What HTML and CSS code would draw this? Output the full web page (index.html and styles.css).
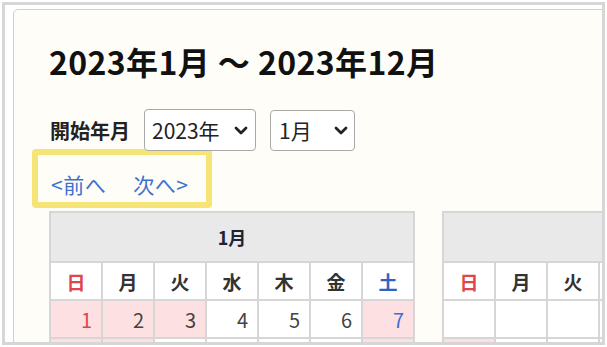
FILE: index.html
```html
<!DOCTYPE html>
<html lang="ja">
<head>
<meta charset="utf-8">
<link rel="stylesheet" href="styles.css">
</head>
<body>
<div class="frame">
  <div class="panel">
    <h1 class="title">2023年1月 〜 2023年12月</h1>
    <div class="form-row">
      <span class="form-label">開始年月</span>
      <div class="select-wrap year">
        <select class="select"><option>2023年</option></select>
        <svg class="chev" viewBox="0 0 14 9" width="14" height="9"><path d="M2 2 L7 7 L12 2" fill="none" stroke="#222" stroke-width="2.8" stroke-linecap="round" stroke-linejoin="round"/></svg>
      </div>
      <div class="select-wrap month">
        <select class="select"><option>1月</option></select>
        <svg class="chev" viewBox="0 0 14 9" width="14" height="9"><path d="M2 2 L7 7 L12 2" fill="none" stroke="#222" stroke-width="2.8" stroke-linecap="round" stroke-linejoin="round"/></svg>
      </div>
    </div>
    <div class="nav">
      <a class="nav-link" href="#">&lt;前へ</a><a class="nav-link next" href="#">次へ&gt;</a>
    </div>
    <div class="cals">
      <table class="cal">
        <tr><th class="cal-head" colspan="7">1月</th></tr>
        <tr class="wk"><td class="sun">日</td><td>月</td><td>火</td><td>水</td><td>木</td><td>金</td><td class="sat">土</td></tr>
        <tr class="days"><td class="hol sun">1</td><td class="hol">2</td><td class="hol">3</td><td>4</td><td>5</td><td>6</td><td class="hol sat">7</td></tr>
        <tr class="days"><td class="hol sun">8</td><td class="hol">9</td><td>10</td><td>11</td><td>12</td><td>13</td><td class="hol sat">14</td></tr>
      </table>
      <table class="cal">
        <tr><th class="cal-head" colspan="7">2月</th></tr>
        <tr class="wk"><td class="sun">日</td><td>月</td><td>火</td><td>水</td><td>木</td><td>金</td><td class="sat">土</td></tr>
        <tr class="days"><td></td><td></td><td></td><td>1</td><td>2</td><td>3</td><td class="hol sat">4</td></tr>
        <tr class="days"><td class="hol sun">5</td><td>6</td><td>7</td><td>8</td><td>9</td><td>10</td><td class="hol sat">11</td></tr>
      </table>
    </div>
  </div>
</div>
</body>
</html>
```
FILE: styles.css
```css
html, body {
  margin: 0;
  padding: 0;
  background: #ffffff;
}
body {
  font-family: "Noto Sans CJK JP", "Noto Sans", sans-serif;
  color: #222;
}
.frame {
  box-sizing: border-box;
  margin: 2px;
  width: 603px;
  height: 343px;
  border: 3px solid #d6d6d6;
  overflow: hidden;
  padding: 4px 0 0 8px;
  background: #fff;
}
.panel {
  width: 760px;
  height: 600px;
  border: 1px solid #d9cfb1;
  border-radius: 5px 0 0 0;
  background: #fefdf8;
  padding: 31px 0 0 35px;
  box-sizing: border-box;
}
.title {
  margin: 0;
  font-size: 32px;
  line-height: 40px;
  font-weight: 700;
  color: #111;
  letter-spacing: 0.4px;
}
.form-row {
  display: flex;
  align-items: center;
  margin-top: 28px;
  height: 42px;
}
.form-label {
  font-size: 20px;
  font-weight: 700;
  color: #222;
  margin-right: 14px;
  padding-left: 1px;
}
.select-wrap {
  position: relative;
  display: flex;
}
.select-wrap + .select-wrap {
  margin-left: 14px;
}
.select {
  appearance: none;
  -webkit-appearance: none;
  box-sizing: border-box;
  border: 1px solid #a9a9a9;
  border-radius: 4px;
  background: #fff;
  font-family: "Noto Sans CJK JP", "Noto Sans", sans-serif;
  font-size: 21px;
  color: #222;
  margin: 0;
  outline: none;
}
.year .select {
  width: 112px;
  height: 42px;
  padding: 0 0 0 7px;
}
.month .select {
  width: 85px;
  height: 41px;
  padding: 0 0 0 8px;
}
.chev {
  position: absolute;
  top: 50%;
  margin-top: -4px;
  pointer-events: none;
}
.year .chev { right: 8px; }
.month .chev { right: 7px; }
.nav {
  box-sizing: border-box;
  width: 180px;
  height: 59px;
  margin: -2px 0 0 -17px;
  border: 6px solid #f6e476;
  border-radius: 4px;
  padding: 17px 0 0 13px;
  font-size: 21px;
  line-height: 25px;
}
.nav-link {
  color: #3d72cf;
  text-decoration: none;
  letter-spacing: 0.5px;
}
.nav-link.next {
  margin-left: 27px;
}
.cals {
  display: flex;
  gap: 27px;
  margin-top: 3px;
  align-items: flex-start;
}
.cal {
  flex: none;
  width: 366px;
  border-collapse: collapse;
  border: 2px solid #d6d6d6;
  background: #fff;
  table-layout: fixed;
}
.cal td, .cal th {
  border: 2px solid #d6d6d6;
  padding: 0;
}
.cal-head {
  background: #e9e9e9;
  height: 48px;
  font-size: 18px;
  font-weight: 700;
  color: #1f2233;
  text-align: center;
}
.wk td {
  height: 36px;
  text-align: center;
  font-size: 19px;
  font-weight: 700;
  color: #333;
}
.days td {
  height: 36px;
  text-align: right;
  padding-right: 9px;
  font-size: 20px;
  color: #444;
}
.cal .hol {
  background: #fde0e1;
}
.cal .sun {
  color: #e0454b;
}
.cal .sat {
  color: #2e62c6;
}
.days .sun { color: #e0454b; }
.days .sat { color: #3d6fcf; }
```
